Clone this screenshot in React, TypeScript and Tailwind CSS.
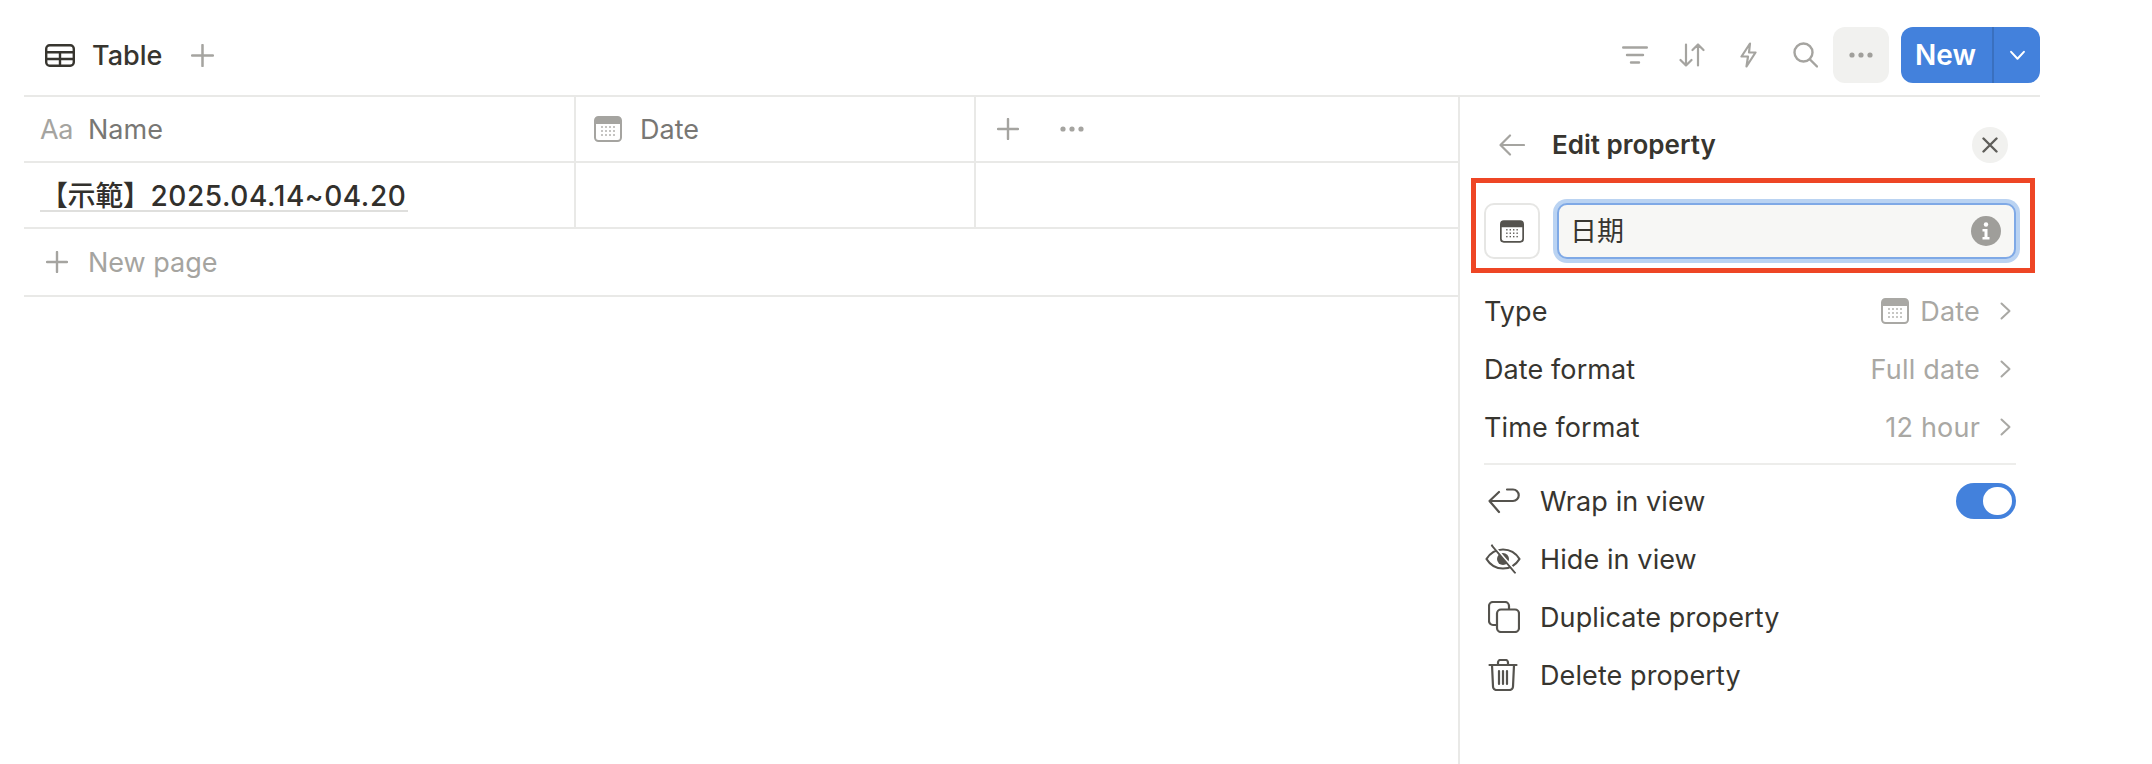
import React from "react";

const Calendar = ({ className, band = "#a5a4a0", body = "#fff" }: { className?: string; band?: string; body?: string }) => (
  <svg viewBox="0 0 28 26" className={className}>
    <rect x="1" y="1" width="26" height="24" rx="3.5" fill={body} stroke={band} strokeWidth="2" />
    <path d="M1 5a4 4 0 0 1 4-4h18a4 4 0 0 1 4 4v3H1z" fill={band} />
    {[11, 15, 19].map((y) =>
      [8, 12, 16, 20].map((x) => <rect key={`${x}-${y}`} x={x - 0.8} y={y - 0.8} width="1.6" height="1.6" fill={band} />)
    )}
  </svg>
);

const Chevron = () => (
  <svg viewBox="0 0 11 18" className="w-[11px] h-[18px]" fill="none" stroke="#a9a8a4" strokeWidth="2" strokeLinecap="round" strokeLinejoin="round">
    <path d="M1.5 1.5L9.5 9l-8 7.5" />
  </svg>
);

const Dots = ({ className, color }: { className?: string; color: string }) => (
  <svg viewBox="0 0 24 6" className={className} fill={color}>
    <circle cx="3" cy="3" r="2.6" />
    <circle cx="12" cy="3" r="2.6" />
    <circle cx="21" cy="3" r="2.6" />
  </svg>
);

const Plus = ({ className }: { className?: string }) => (
  <svg viewBox="0 0 22 22" className={className} fill="none" stroke="#a5a4a0" strokeWidth="2.4" strokeLinecap="round">
    <path d="M11 1v20M1 11h20" />
  </svg>
);

const PropRow = ({ label, value, icon }: { label: string; value: string; icon?: boolean }) => (
  <div className="h-[58px] flex items-center justify-between pb-[2px]">
    <span className="text-[#37352f] tracking-[0.1px]">{label}</span>
    <div className="flex items-center">
      {icon && <Calendar className="w-[28px] h-[26px] mr-[11px]" band="#a9a8a4" />}
      <span className="text-[#a9a8a4] tracking-[0.2px]">{value}</span>
      <span className="ml-[20px] mr-[5px] flex"><Chevron /></span>
    </div>
  </div>
);

const ActionRow = ({ icon, label, children }: { icon: React.ReactNode; label: string; children?: React.ReactNode }) => (
  <div className="h-[58px] flex items-center">
    <span className="w-[56px] flex justify-start pl-[4px]">{icon}</span>
    <span className="text-[#37352f] flex-1 tracking-[0.1px]">{label}</span>
    {children}
  </div>
);

const stroke = { fill: "none", stroke: "#55534e", strokeWidth: 2.2, strokeLinecap: "round" as const, strokeLinejoin: "round" as const };

export default function App() {
  return (
    <div
      className="relative w-[2152px] h-[764px] bg-white overflow-hidden pl-[24px] text-[27px] leading-none"
      style={{ fontFamily: "Inter, 'Noto Sans CJK TC', sans-serif" }}
    >
      <div className="w-[2016px] h-full flex flex-col">
        {/* toolbar */}
        <div className="h-[97px] shrink-0 border-b-2 border-[#e9e9e7] flex items-center pt-[15px]">
          <svg viewBox="0 0 30 23" className="ml-[21px] w-[30px] h-[23px]" fill="none" stroke="#37352f" strokeWidth="2.4">
            <rect x="1.2" y="1.2" width="27.6" height="20.6" rx="3.5" />
            <path d="M1.2 8.2h27.6M1.2 15h27.6M15 8.2v13.6" />
          </svg>
          <span className="ml-[17px] text-[#37352f] font-medium">Table</span>
          <Plus className="ml-[29px] w-[23px] h-[23px]" />
          <div className="ml-auto flex items-center">
            <svg viewBox="0 0 26 18" className="w-[26px] h-[18px]" fill="none" stroke="#a5a4a0" strokeWidth="2.4" strokeLinecap="round">
              <path d="M1.2 1.5h23.6M5 9h16M9 16.5h8" />
            </svg>
            <svg viewBox="0 0 26 24" className="ml-[31px] w-[26px] h-[24px]" fill="none" stroke="#a5a4a0" strokeWidth="2.2" strokeLinecap="round" strokeLinejoin="round">
              <path d="M7 1.5v21M1.5 17l5.5 5.5 5.5-5.5M19 22.5v-21M13.500 7L19 1.500 24.500 7" />
            </svg>
            <svg viewBox="0 0 17 26" className="ml-[35px] w-[17px] h-[26px]" fill="none" stroke="#a5a4a0" strokeWidth="2.2" strokeLinejoin="round" strokeLinecap="round">
              <path d="M10 1.500L1.500 14.500H8L6.500 24.500 15.500 10.500H9z" />
            </svg>
            <svg viewBox="0 0 25 26" className="ml-[36px] w-[25px] h-[26px]" fill="none" stroke="#a5a4a0" strokeWidth="2.4" strokeLinecap="round">
              <circle cx="10.500" cy="10.500" r="9" />
              <path d="M17 17.500l7 7" />
            </svg>
            <div className="ml-[15px] w-[56px] h-[56px] rounded-[12px] bg-[#f1f1ef] flex items-center justify-center">
              <Dots className="w-[24px] h-[6px]" color="#a09f9b" />
            </div>
            <div className="ml-[12px] w-[139px] h-[56px] rounded-[12px] bg-[#4381dc] flex items-center text-white font-semibold text-[28px]">
              <span className="w-[91px] text-center -ml-[1px]">New</span>
              <div className="w-[2px] h-full bg-[#3a70bf] ml-[1px]" />
              <div className="flex-1 flex justify-center">
                <svg viewBox="0 0 18 12" className="w-[17px] h-[11px]" fill="none" stroke="#fff" strokeWidth="2.2" strokeLinecap="round" strokeLinejoin="round">
                  <path d="M2 2l7 7.500L16 2" />
                </svg>
              </div>
            </div>
          </div>
        </div>

        <div className="flex-1 flex min-h-0">
          {/* table */}
          <div className="flex-1 min-w-0">
            <div className="h-[66px] border-b-2 border-[#e9e9e7] flex text-[#787774]">
              <div className="w-[552px] border-r-2 border-[#e9e9e7] flex items-center pl-[16px]">
                <span className="w-[48px] text-[#a5a4a0] tracking-[-0.5px]">Aa</span>
                <span>Name</span>
              </div>
              <div className="w-[400px] border-r-2 border-[#e9e9e7] flex items-center pl-[18px]">
                <Calendar className="w-[28px] h-[26px] mr-[18px]" band="#a5a4a0" />
                <span>Date</span>
              </div>
              <div className="flex items-center pl-[21px]">
                <Plus className="w-[22px] h-[22px]" />
                <Dots className="ml-[41px] w-[24px] h-[6px]" color="#a5a4a0" />
              </div>
            </div>
            <div className="h-[66px] border-b-2 border-[#e9e9e7] flex">
              <div className="w-[552px] border-r-2 border-[#e9e9e7] flex items-center pl-[16px] pt-[4px]">
                <span className="text-[#32302c] font-medium text-[28px] tracking-[0.6px] border-b-2 border-[#dfdfdd] w-[368px] whitespace-nowrap">
                  <span className="tracking-[-0.4px]">【示範】</span>2025.04.14~04.20
                </span>
              </div>
              <div className="w-[400px] border-r-2 border-[#e9e9e7]" />
            </div>
            <div className="h-[68px] border-b-2 border-[#e9e9e7] flex items-center pl-[22px] text-[#a5a4a0]">
              <Plus className="w-[22px] h-[22px]" />
              <span className="ml-[20px]">New page</span>
            </div>
          </div>

          {/* panel */}
          <div className="w-[582px] shrink-0 border-l-2 border-[#e9e9e7] pl-[24px] pr-[24px]">
            <div className="h-[96px] flex items-center">
              <svg viewBox="0 0 26 22" className="ml-[15px] w-[26px] h-[22px]" fill="none" stroke="#a5a4a0" strokeWidth="2.2" strokeLinecap="round" strokeLinejoin="round">
                <path d="M25 11H2M11 1.500L1.500 11l9.500 9.500" />
              </svg>
              <span className="ml-[27px] text-[#37352f] font-semibold text-[26px]">Edit property</span>
              <div className="ml-auto mr-[8px] w-[36px] h-[36px] rounded-full bg-[#f1f1ef] flex items-center justify-center">
                <svg viewBox="0 0 16 16" className="w-[16px] h-[16px]" fill="none" stroke="#5f5e5a" strokeWidth="2.4" strokeLinecap="round">
                  <path d="M1.500 1.500l13 13M14.500 1.500l-13 13" />
                </svg>
              </div>
            </div>
            <div className="h-[76px] flex items-center">
              <div className="w-[56px] h-[56px] rounded-[10px] border-2 border-[#e6e6e4] flex items-center justify-center shrink-0">
                <Calendar className="w-[24px] h-[23px]" band="#55534e" />
              </div>
              <div className="ml-[17px] flex-1 h-[56px] rounded-[10px] bg-[#f7f7f5] border-2 border-[#7fa9e6] shadow-[0_0_0_4px_#bad3f2] flex items-center pl-[13px] pr-[13px] text-[#37352f]">
                <span className="flex-1 -ml-[2px]">日期</span>
                <div className="w-[30px] h-[30px] rounded-full bg-[#9f9e9a] flex items-center justify-center">
                  <svg viewBox="0 0 10 18" className="w-[10px] h-[18px]" fill="#fff">
                    <circle cx="5" cy="2.500" r="2.200" />
                    <path d="M1.500 7h5v8h2v2.500H1.500V15h2V9.500h-2z" />
                  </svg>
                </div>
              </div>
            </div>
            <div className="mt-[14px]">
              <PropRow label="Type" value="Date" icon />
              <PropRow label="Date format" value="Full date" />
              <PropRow label="Time format" value="12 hour" />
            </div>
            <div className="mt-[6px] h-[2px] bg-[#ededeb]" />
            <div className="mt-[7px]">
              <ActionRow
                label="Wrap in view"
                icon={
                  <svg viewBox="0 0 32 26" className="w-[32px] h-[26px]" {...stroke}>
                    <path d="M19 1.500h6a5.750 5.750 0 0 1 0 11.500H1.500M11 4L1.500 13l9.500 11" />
                  </svg>
                }
              >
                <div className="w-[60px] h-[36px] rounded-full bg-[#4381dc] flex items-center justify-end pr-[4px]">
                  <div className="w-[29px] h-[28px] rounded-full bg-white" />
                </div>
              </ActionRow>
              <ActionRow
                label="Hide in view"
                icon={
                  <svg viewBox="0 0 36 30" className="w-[36px] h-[30px] -ml-[3px]" {...stroke}>
                    <path d="M1.500 15C5.500 8.500 11 5.500 18 5.500S30.500 8.500 34.500 15C30.500 21.500 25 24.500 18 24.500S5.500 21.500 1.500 15z" />
                    <circle cx="18" cy="15" r="6" fill="#55534e" stroke="none" />
                    <path d="M7 1.500L30 28.500" strokeWidth="2.200" />
                    <path d="M9 1.500L32 28.500" stroke="#fff" strokeWidth="1.500" />
                  </svg>
                }
              />
              <ActionRow
                label="Duplicate property"
                icon={
                  <svg viewBox="0 0 32 32" className="w-[32px] h-[32px]" {...stroke}>
                    <path d="M8 24H5a4 4 0 0 1-4-4V5a4 4 0 0 1 4-4h12a4 4 0 0 1 4 4v3" />
                    <rect x="9" y="8.500" width="22" height="22.500" rx="4" />
                  </svg>
                }
              />
              <ActionRow
                label="Delete property"
                icon={
                  <svg viewBox="0 0 30 32" className="w-[30px] h-[32px]" {...stroke}>
                    <path d="M1.500 6h27M10 6V3.500A2.500 2.500 0 0 1 12.500 1h5A2.500 2.500 0 0 1 20 3.500V6M4 6l1 21.500A3.500 3.500 0 0 0 8.500 31h13a3.500 3.500 0 0 0 3.500-3.500L26 6M11 12v13M15 12v13M19 12v13" />
                  </svg>
                }
              />
            </div>
          </div>
        </div>
      </div>

      {/* annotation rectangle drawn over the screenshot */}
      <div className="absolute left-[1471px] top-[178px] w-[564px] h-[95px] border-[5px] border-[#ee4625]" />
    </div>
  );
}
